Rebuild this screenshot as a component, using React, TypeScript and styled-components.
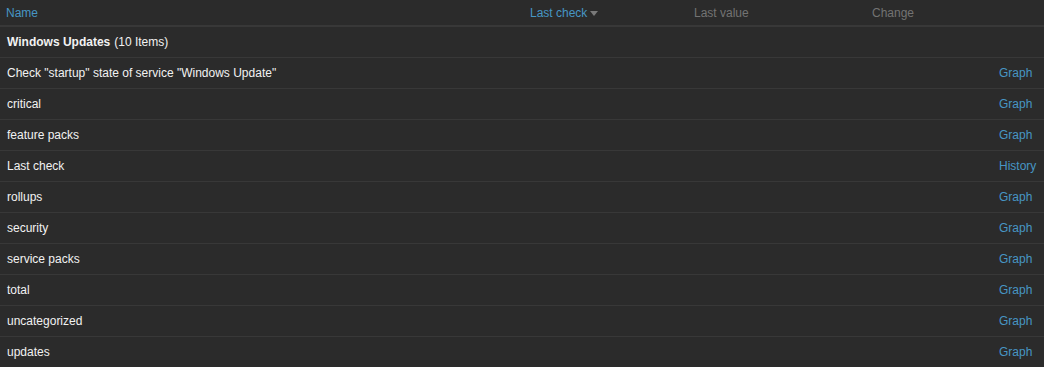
import React from "react";
import styled, { createGlobalStyle } from "styled-components";

const Global = createGlobalStyle`
  html, body { margin: 0; padding: 0; background: #2b2b2b; }
  body { font-family: Arial, "Liberation Sans", sans-serif; font-size: 12px; color: #f2f2f2; }
`;

const cols = "524px 164px 178px 126px 1fr";

const Table = styled.div`
  width: 1044px;
  background: #2b2b2b;
`;

const HeadRow = styled.div`
  display: grid;
  grid-template-columns: ${cols};
  height: 25px;
  border-bottom: 2px solid #383838;
  align-items: center;
`;

const Th = styled.div<{ $active?: boolean }>`
  padding: 0 6px;
  color: ${(p) => (p.$active ? "#4796c4" : "#737373")};
  line-height: 14px;
  display: flex;
  align-items: center;
`;

const Arrow = styled.span`
  display: inline-block;
  width: 0;
  height: 0;
  margin-left: 3px;
  margin-top: 1px;
  border-left: 4px solid transparent;
  border-right: 4px solid transparent;
  border-top: 5px solid #7a7a7a;
`;

const GroupRow = styled.div`
  height: 30px;
  border-bottom: 1px solid #383838;
  display: flex;
  align-items: center;
  padding: 0 7px;
  color: #f2f2f2;
`;

const Bold = styled.b`
  font-weight: bold;
  margin-right: 4px;
`;

const Row = styled.div`
  display: grid;
  grid-template-columns: ${cols};
  height: 30px;
  border-bottom: 1px solid #383838;
  align-items: center;
`;

const Td = styled.div`
  padding: 0 7px;
  white-space: nowrap;
  color: #f2f2f2;
`;

const Link = styled.a`
  color: #4796c4;
  text-decoration: none;
`;

const items: [string, string][] = [
  ['Check "startup" state of service "Windows Update"', "Graph"],
  ["critical", "Graph"],
  ["feature packs", "Graph"],
  ["Last check", "History"],
  ["rollups", "Graph"],
  ["security", "Graph"],
  ["service packs", "Graph"],
  ["total", "Graph"],
  ["uncategorized", "Graph"],
  ["updates", "Graph"],
];

export default function App() {
  return (
    <>
      <Global />
      <Table>
        <HeadRow>
          <Th $active>Name</Th>
          <Th $active>
            Last check
            <Arrow />
          </Th>
          <Th>Last value</Th>
          <Th>Change</Th>
          <Th />
        </HeadRow>
        <GroupRow>
          <Bold>Windows Updates</Bold>(10 Items)
        </GroupRow>
        {items.map(([name, link]) => (
          <Row key={name}>
            <Td>{name}</Td>
            <Td />
            <Td />
            <Td />
            <Td>
              <Link href="#">{link}</Link>
            </Td>
          </Row>
        ))}
      </Table>
    </>
  );
}
